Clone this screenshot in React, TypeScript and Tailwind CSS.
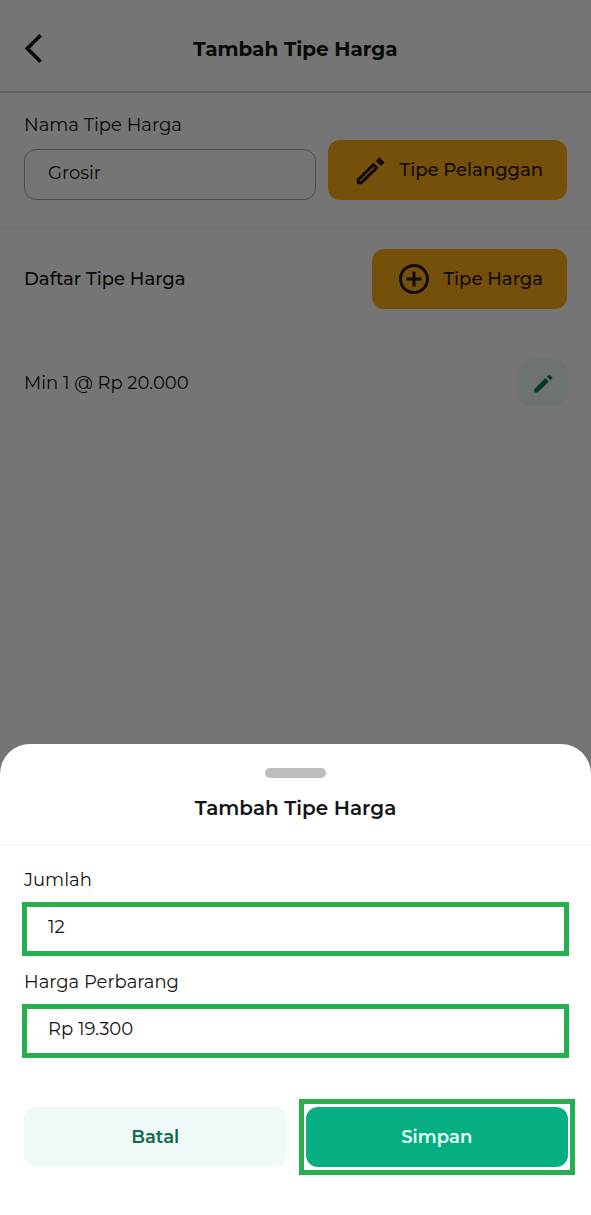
import { useId, useState } from "react";
import type { ReactNode } from "react";
import { MdAddCircleOutline, MdArrowBackIosNew } from "react-icons/md";

export default function App() {
  const [name, setName] = useState("Grosir");
  const [qty, setQty] = useState("12");
  const [price, setPrice] = useState("Rp 19.300");

  return (
    <div className="min-h-screen bg-white font-['Montserrat','Inter',sans-serif] text-lg text-[#141414]">
      <header className="grid grid-cols-[40px_1fr_40px] items-center border-b-2 border-[#d0d0d0] px-4 pt-7 pb-[23px]">
        <button type="button" aria-label="Kembali" className="flex h-10 items-center">
          <MdArrowBackIosNew className="size-[35px]" />
        </button>
        <h1 className="pt-[2px] text-center text-xl leading-7 font-bold">Tambah Tipe Harga</h1>
      </header>

      <main>
        <section className="flex items-end gap-3 border-b border-[#f2f2f2] px-6 pt-5 pb-7">
          <div className="min-w-0 flex-1">
            <label htmlFor="type-name" className="block leading-6">Nama Tipe Harga</label>
            <input
              id="type-name"
              value={name}
              onChange={(e) => setName(e.target.value)}
              className="mt-3 block h-[51px] w-full rounded-xl border border-[#a8a8a8] px-[23px] pb-1 outline-none"
            />
          </div>
          <AmberButton icon={<PencilIcon className="size-9" />}>Tipe Pelanggan</AmberButton>
        </section>

        <section className="px-6 pt-5">
          <div className="flex items-center justify-between">
            <h2 className="font-medium">Daftar Tipe Harga</h2>
            <AmberButton icon={<MdAddCircleOutline className="size-9" />}>Tipe Harga</AmberButton>
          </div>
          <div className="mt-[50px] flex items-center justify-between">
            <p>Min 1 @ Rp 20.000</p>
            <button
              type="button"
              aria-label="Ubah harga"
              className="flex size-12 items-center justify-center rounded-xl bg-[#f0f9f6] text-[#0a7f5b]"
            >
              <PencilIcon filled className="size-6" />
            </button>
          </div>
        </section>
      </main>

      <div className="fixed inset-0 flex flex-col justify-end bg-black/54">
        <div role="dialog" aria-labelledby="sheet-title" className="rounded-t-[30px] bg-white pb-10">
          <div className="border-b-2 border-[#f9f9f9] pt-6 pb-5">
            <div className="mx-auto h-[10px] w-[61px] rounded-full bg-[#bdbdbd]" />
            <h2 id="sheet-title" className="mt-[14px] text-center text-xl leading-8 font-semibold">Tambah Tipe Harga</h2>
          </div>
          <div className="flex flex-col gap-[14px] px-[22px] pt-[22px]">
            <Field label="Jumlah" value={qty} onChange={setQty} />
            <Field label="Harga Perbarang" value={price} onChange={setPrice} />
          </div>
          <div className="mt-[41px] flex items-center gap-3 pr-4 pl-6">
            <button type="button" className="h-15 flex-1 rounded-xl bg-[#eff9f7] font-semibold text-[#106b4d]">
              Batal
            </button>
            <div className="flex-1 border-5 border-[#26af4f] px-[2px] py-[3px]">
              <button type="button" className="block h-15 w-full rounded-xl bg-[#06ae81] font-semibold text-[#e8fff8]">
                Simpan
              </button>
            </div>
          </div>
        </div>
      </div>
    </div>
  );
}

function AmberButton({ icon, children }: { icon: ReactNode; children: ReactNode }) {
  return (
    <button type="button" className="flex h-15 shrink-0 items-center gap-3 rounded-xl bg-[#ffae18] px-6 font-medium text-[#2a1a14]">
      {icon}
      {children}
    </button>
  );
}

function Field({ label, value, onChange }: { label: string; value: string; onChange: (value: string) => void }) {
  const id = useId();
  return (
    <div>
      <label htmlFor={id} className="block px-[2px] leading-6">{label}</label>
      <input
        id={id}
        value={value}
        onChange={(e) => onChange(e.target.value)}
        className="mt-[10px] block h-[54px] w-full border-5 border-[#26af4f] px-[21px] pb-1 outline-none"
      />
    </div>
  );
}

// Slim pencil with a detached eraser; outlined unless `filled`.
function PencilIcon({ filled = false, className }: { filled?: boolean; className?: string }) {
  return (
    <svg viewBox="0 0 36 36" className={className} stroke="currentColor" strokeLinejoin="round" aria-hidden="true">
      <path d="M6.2 27.9V30.8H9.1L24.7 15.8L21.5 12.6Z" strokeWidth="3" fill={filled ? "currentColor" : "none"} />
      <path d="M24.6 8.8L27.4 6L31.9 10.4L29.1 13.2Z" strokeWidth="1.2" fill="currentColor" />
    </svg>
  );
}
